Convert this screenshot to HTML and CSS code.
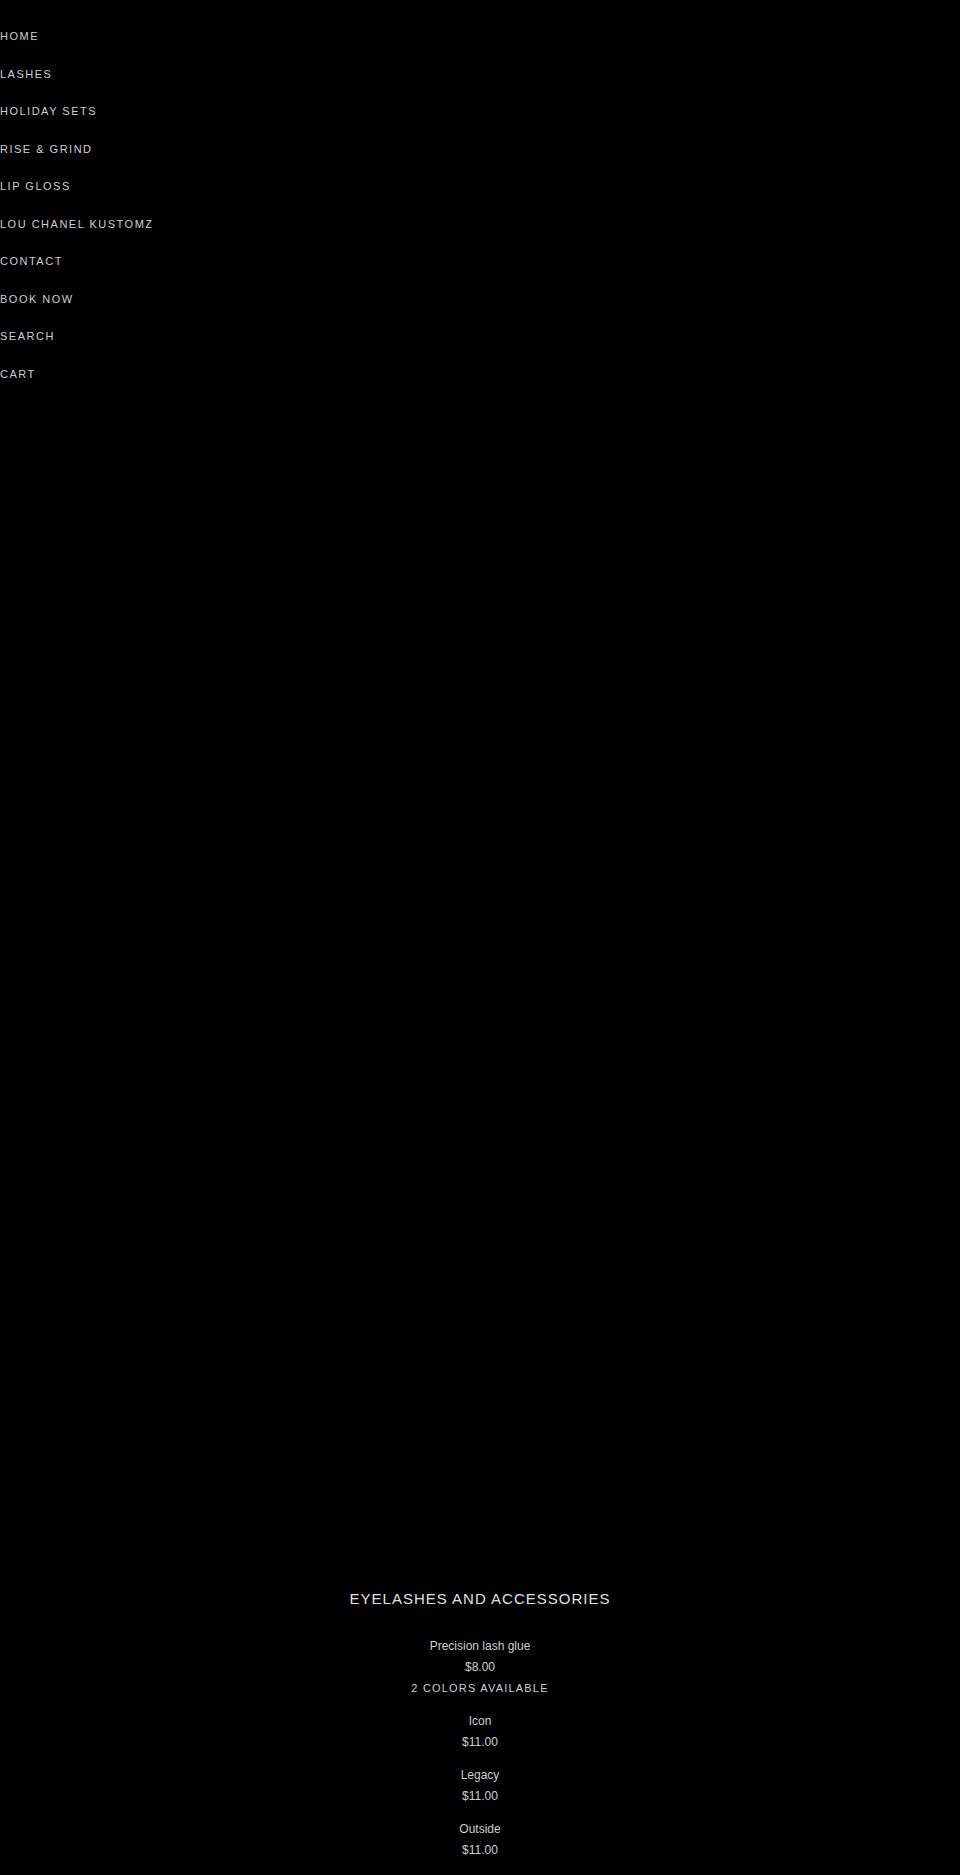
FILE: index.html
```html
<!DOCTYPE html>
<html lang="en">
<head>
<meta charset="utf-8">
<title>Eyelashes and Accessories</title>
<link rel="stylesheet" href="styles.css">
</head>
<body>
<nav class="site-nav">
  <ul class="nav-list">
    <li><a href="#">HOME</a></li>
    <li><a href="#">LASHES</a></li>
    <li><a href="#">HOLIDAY SETS</a></li>
    <li><a href="#">RISE &amp; GRIND</a></li>
    <li><a href="#">LIP GLOSS</a></li>
    <li><a href="#">LOU CHANEL KUSTOMZ</a></li>
    <li><a href="#">CONTACT</a></li>
    <li><a href="#">BOOK NOW</a></li>
    <li><a href="#">SEARCH</a></li>
    <li><a href="#">CART</a></li>
  </ul>
</nav>
<div class="hero"></div>
<main class="collection">
  <h1 class="collection-title">EYELASHES AND ACCESSORIES</h1>
  <div class="product">
    <div class="product-name">Precision lash glue</div>
    <div class="product-price">$8.00</div>
    <div class="product-note">2 COLORS AVAILABLE</div>
  </div>
  <div class="product">
    <div class="product-name">Icon</div>
    <div class="product-price">$11.00</div>
  </div>
  <div class="product">
    <div class="product-name">Legacy</div>
    <div class="product-price">$11.00</div>
  </div>
  <div class="product">
    <div class="product-name">Outside</div>
    <div class="product-price">$11.00</div>
  </div>
</main>
</body>
</html>
```
FILE: styles.css
```css
html, body {
  margin: 0;
  padding: 0;
  background: #000;
}
body {
  font-family: "Liberation Sans", Arial, sans-serif;
  color: #cfcfcf;
  height: 1875px;
  overflow: hidden;
}
.site-nav {
  padding-top: 18px;
}
.nav-list {
  list-style: none;
  margin: 0;
  padding: 0;
}
.nav-list li {
  display: block;
}
.nav-list a {
  display: block;
  color: #cfcfcf;
  text-decoration: none;
  font-size: 11px;
  line-height: 15.5px;
  letter-spacing: 1.5px;
  padding: 11px 0;
}
.hero {
  height: 1196px;
}
.collection {
  text-align: center;
}
.collection-title {
  margin: 0 0 27px;
  font-size: 15px;
  font-weight: normal;
  line-height: 20px;
  letter-spacing: 1px;
  color: #e0e0e0;
}
.product {
  margin-bottom: 12px;
}
.product-name,
.product-price {
  font-size: 12px;
  line-height: 21px;
}
.product-note {
  font-size: 11px;
  line-height: 21px;
  letter-spacing: 1.2px;
}
```
